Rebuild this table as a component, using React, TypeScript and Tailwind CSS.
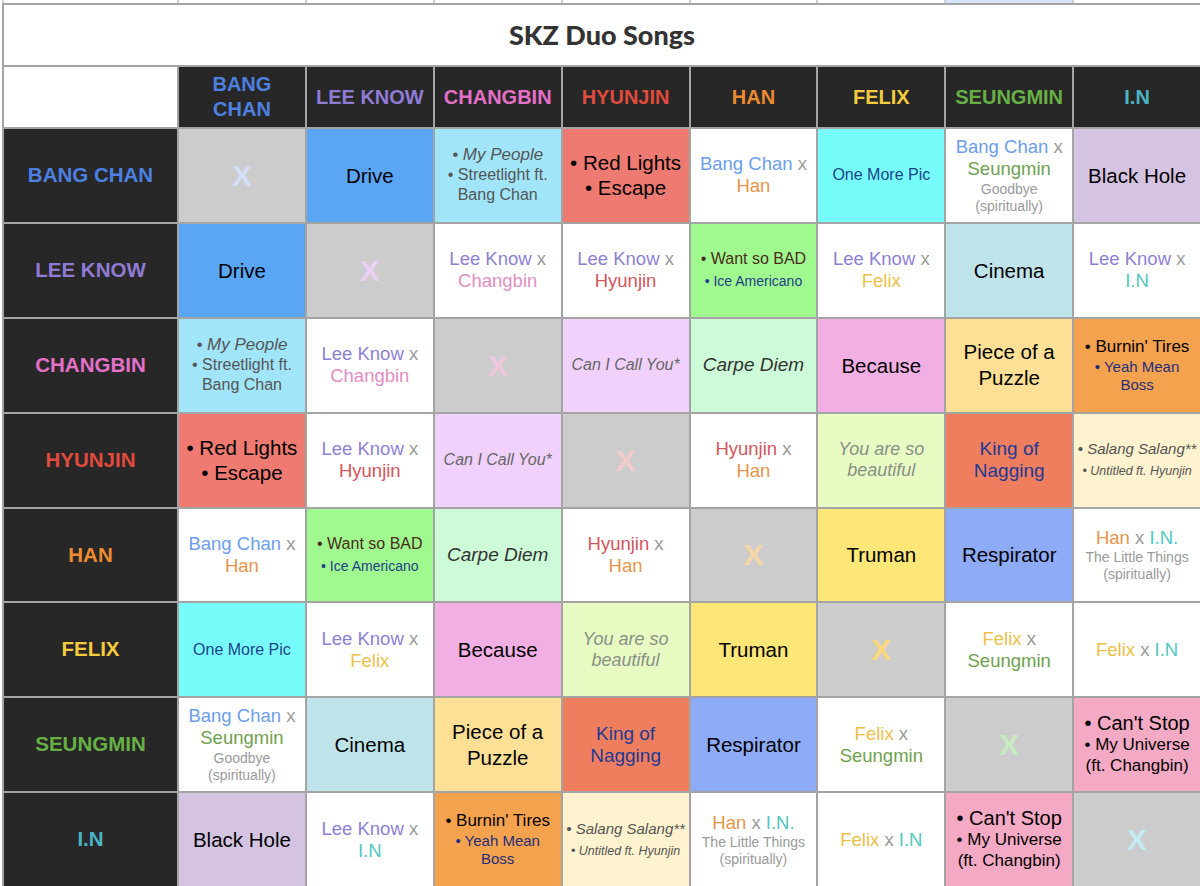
import React from "react";

type Member = { key: string; label: string; head: string; x: string };

const MEMBERS: Member[] = [
  { key: "bc", label: "BANG CHAN", head: "text-[#4d80e1]", x: "text-[#d4def8]" },
  { key: "lk", label: "LEE KNOW", head: "text-[#8f7bd5]", x: "text-[#ead0f4]" },
  { key: "cb", label: "CHANGBIN", head: "text-[#e570c8]", x: "text-[#efc6de]" },
  { key: "hj", label: "HYUNJIN", head: "text-[#e04b3d]", x: "text-[#f3cbcb]" },
  { key: "han", label: "HAN", head: "text-[#ec8b30]", x: "text-[#f6d6a6]" },
  { key: "fx", label: "FELIX", head: "text-[#f5cc3d]", x: "text-[#fbd87c]" },
  { key: "sm", label: "SEUNGMIN", head: "text-[#67b045]", x: "text-[#c6ecc0]" },
  { key: "in", label: "I.N", head: "text-[#4bb5c5]", x: "text-[#c4eaf3]" },
];

const NAME: Record<string, string> = {
  "Bang Chan": "text-[#6d9eeb]",
  "Lee Know": "text-[#8e7fd4]",
  Changbin: "text-[#df8ec3]",
  Hyunjin: "text-[#d4545c]",
  Han: "text-[#e5954a]",
  Felix: "text-[#ecbf48]",
  Seungmin: "text-[#6fa14f]",
  "I.N": "text-[#52c6c2]",
  "I.N.": "text-[#52c6c2]",
};

const Name = ({ n }: { n: string }) => <span className={NAME[n]}>{n}</span>;
const X = () => <span className="text-[#9a9a9a]"> x</span>;

const Duo = ({ a, b, extra }: { a: string; b: string; extra?: string[] }) => (
  <div className="text-[18.5px] leading-[22px]">
    <div>
      <Name n={a} />
      <X />
    </div>
    <div>
      <Name n={b} />
    </div>
    {extra && (
      <div className="mt-[1px] text-[14px] leading-[17px] text-[#9a9a9a]">
        {extra.map((e) => (
          <div key={e}>{e}</div>
        ))}
      </div>
    )}
  </div>
);

type Pair = { bg: string; body: React.ReactNode };

const Big = ({ lines }: { lines: string[] }) => (
  <div className="text-[20.5px] leading-[25px] text-black">
    {lines.map((l) => (
      <div key={l}>{l}</div>
    ))}
  </div>
);

const PAIRS: Record<string, Pair> = {
  "0-1": { bg: "bg-[#5ba5f5]", body: <Big lines={["Drive"]} /> },
  "0-2": {
    bg: "bg-[#a0e5fa]",
    body: (
      <div className="leading-[20px] text-[#555]">
        <div className="text-[17px] italic">• My People</div>
        <div className="text-[16px]">• Streetlight ft.</div>
        <div className="text-[16px]">Bang Chan</div>
      </div>
    ),
  },
  "0-3": { bg: "bg-[#ee7a72]", body: <Big lines={["• Red Lights", "• Escape"]} /> },
  "0-4": { bg: "bg-white", body: <Duo a="Bang Chan" b="Han" /> },
  "0-5": {
    bg: "bg-[#77fcfc]",
    body: <div className="text-[16px] text-[#1c4587]">One More Pic</div>,
  },
  "0-6": {
    bg: "bg-white",
    body: <Duo a="Bang Chan" b="Seungmin" extra={["Goodbye", "(spiritually)"]} />,
  },
  "0-7": { bg: "bg-[#d5c4e1]", body: <Big lines={["Black Hole"]} /> },
  "1-2": { bg: "bg-white", body: <Duo a="Lee Know" b="Changbin" /> },
  "1-3": { bg: "bg-white", body: <Duo a="Lee Know" b="Hyunjin" /> },
  "1-4": {
    bg: "bg-[#a0f98f]",
    body: (
      <div className="leading-[22px]">
        <div className="text-[16px] text-[#4a2c1c]">• Want so BAD</div>
        <div className="text-[14px] text-[#1c3f8a]">• Ice Americano</div>
      </div>
    ),
  },
  "1-5": { bg: "bg-white", body: <Duo a="Lee Know" b="Felix" /> },
  "1-6": { bg: "bg-[#bee3e9]", body: <Big lines={["Cinema"]} /> },
  "1-7": { bg: "bg-white", body: <Duo a="Lee Know" b="I.N" /> },
  "2-3": {
    bg: "bg-[#efd1fb]",
    body: <div className="text-[16px] italic text-[#666]">Can I Call You*</div>,
  },
  "2-4": {
    bg: "bg-[#cefbd7]",
    body: <div className="text-[19px] italic text-[#333]">Carpe Diem</div>,
  },
  "2-5": { bg: "bg-[#f2afe3]", body: <Big lines={["Because"]} /> },
  "2-6": {
    bg: "bg-[#fde096]",
    body: (
      <div className="text-[20.5px] leading-[26px] text-black">
        <div>Piece of a</div>
        <div>Puzzle</div>
      </div>
    ),
  },
  "2-7": {
    bg: "bg-[#f5a24e]",
    body: (
      <div>
        <div className="text-[17px] leading-[20px] text-black">• Burnin' Tires</div>
        <div className="mt-[1px] text-[15px] leading-[18px] text-[#1d2f7c]">
          <div>• Yeah Mean</div>
          <div>Boss</div>
        </div>
      </div>
    ),
  },
  "3-4": { bg: "bg-white", body: <Duo a="Hyunjin" b="Han" /> },
  "3-5": {
    bg: "bg-[#e7fbc3]",
    body: (
      <div className="text-[18px] leading-[21px] italic text-[#8a8f86]">
        <div>You are so</div>
        <div>beautiful</div>
      </div>
    ),
  },
  "3-6": {
    bg: "bg-[#ee7e5e]",
    body: (
      <div className="text-[19px] leading-[22px] text-[#1f3a93]">
        <div>King of</div>
        <div>Nagging</div>
      </div>
    ),
  },
  "3-7": {
    bg: "bg-[#fef2cf]",
    body: (
      <div className="whitespace-nowrap leading-[22px] italic text-[#555]">
        <div className="text-[15px]">• Salang Salang**</div>
        <div className="text-[12.5px]">• Untitled ft. Hyunjin</div>
      </div>
    ),
  },
  "4-5": { bg: "bg-[#fee776]", body: <Big lines={["Truman"]} /> },
  "4-6": { bg: "bg-[#8dabf7]", body: <Big lines={["Respirator"]} /> },
  "4-7": {
    bg: "bg-white",
    body: (
      <div>
        <div className="text-[18.5px] leading-[22px]">
          <Name n="Han" />
          <X /> <Name n="I.N." />
        </div>
        <div className="text-[14px] leading-[17px] text-[#9a9a9a]">
          <div>The Little Things</div>
          <div>(spiritually)</div>
        </div>
      </div>
    ),
  },
  "5-6": { bg: "bg-white", body: <Duo a="Felix" b="Seungmin" /> },
  "5-7": {
    bg: "bg-white",
    body: (
      <div className="text-[18.5px]">
        <Name n="Felix" />
        <X /> <Name n="I.N" />
      </div>
    ),
  },
  "6-7": {
    bg: "bg-[#f4a9c4]",
    body: (
      <div className="leading-[21px] text-black">
        <div className="text-[20px]">• Can't Stop</div>
        <div className="text-[17px]">• My Universe</div>
        <div className="text-[17px]">(ft. Changbin)</div>
      </div>
    ),
  },
};

const cellBase = "flex items-center justify-center text-center px-1 overflow-hidden";

export default function App() {
  return (
    <div className="h-[886px] w-[1200px] overflow-hidden bg-white pl-[2px] font-['Liberation_Sans',Arial,sans-serif]">
      {/* sheet cells above the table */}
      <div className="grid h-[3px] grid-cols-[173px_repeat(8,minmax(0,1fr))] gap-x-[2px] bg-[#cfcfcf] pl-[2px]">
        {Array.from({ length: 9 }).map((_, i) => (
          <div key={i} className={i === 7 ? "bg-[#d6e3fb]" : "bg-white"} />
        ))}
      </div>

      <div className="grid h-[883px] grid-cols-[173px_repeat(8,minmax(0,1fr))] grid-rows-[60px_60px_repeat(8,minmax(0,1fr))] gap-[2px] bg-[#a4a4a4] pl-[2px] pt-[2px]">
        <div className="col-span-9 flex items-center justify-center bg-white font-['Lato',sans-serif] text-[27px] font-black text-[#333]">
          SKZ Duo Songs
        </div>

        <div className="bg-white" />
        {MEMBERS.map((m) => (
          <div
            key={m.key}
            className={`${cellBase} bg-[#272727] px-[6px] text-[20px] leading-[25px] font-bold ${m.head}`}
          >
            {m.label}
          </div>
        ))}

        {MEMBERS.map((row, i) => (
          <React.Fragment key={row.key}>
            <div className={`${cellBase} bg-[#272727] text-[20.5px] font-bold ${row.head}`}>
              {row.label}
            </div>
            {MEMBERS.map((col, j) => {
              if (i === j) {
                return (
                  <div key={col.key} className={`${cellBase} bg-[#cccccc]`}>
                    <span className={`text-[30px] font-bold ${row.x}`}>X</span>
                  </div>
                );
              }
              const p = PAIRS[`${Math.min(i, j)}-${Math.max(i, j)}`];
              return (
                <div key={col.key} className={`${cellBase} ${p.bg}`}>
                  {p.body}
                </div>
              );
            })}
          </React.Fragment>
        ))}
      </div>
    </div>
  );
}
